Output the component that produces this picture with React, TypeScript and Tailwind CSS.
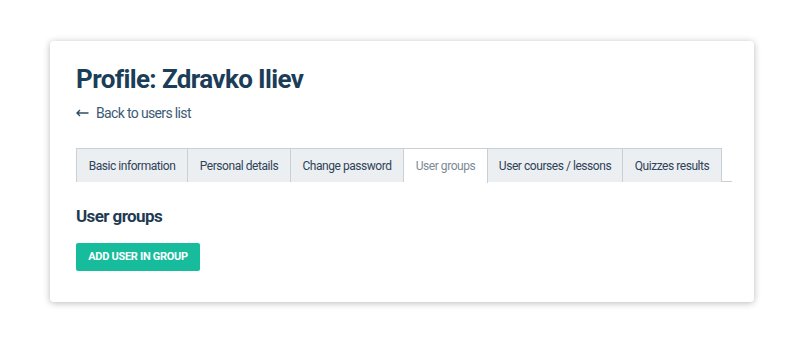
import React from "react";

const tabs = [
  { label: "Basic information", w: 112 },
  { label: "Personal details", w: 103 },
  { label: "Change password", w: 113 },
  { label: "User groups", w: 84, active: true },
  { label: "User courses / lessons", w: 135 },
  { label: "Quizzes results", w: 99 },
];

export default function App() {
  return (
    <div className="w-[802px] h-[343px] bg-white pt-[41px] pl-[50px]" style={{ fontFamily: "Roboto, 'Liberation Sans', sans-serif" }}>
      <div className="w-[704px] h-[261px] bg-white rounded-[4px] shadow-[0_1px_7px_rgba(0,0,0,0.28)] pl-[26px] pr-[22px] pt-[23px]">
        <h1 className="text-[26px] leading-[30px] font-bold text-[#1b3d57] tracking-[-0.62px]">Profile: Zdravko Iliev</h1>
        <div className="mt-[10px] flex items-center gap-[7px] text-[14px] leading-[18px] text-[#3c5a75] tracking-[-0.65px]">
          <svg width="13" height="8" viewBox="0 0 13 8" fill="none">
            <path d="M12.5 4H1.5M4 1L1 4L4 7" stroke="#2f4c66" strokeWidth="1.4" />
          </svg>
          <span>Back to users list</span>
        </div>
        <div className="mt-[26px] flex border-b border-[#c9d0d5] h-[34px]">
          {tabs.map((t) => (
            <div
              key={t.label}
              style={{ width: t.w }}
              className={
                t.active
                  ? "h-[35px] -mb-px flex items-center justify-center text-[12px] tracking-[-0.45px] text-[#7c8a96] bg-white border border-b-0 border-[#c9d0d5] border-l-0"
                  : "h-[34px] flex items-center justify-center text-[12px] tracking-[-0.45px] text-[#2f4257] bg-[#ebeff2] border border-b-0 border-[#c9d0d5] [&:not(:first-child)]:border-l-0"
              }
            >
              {t.label}
            </div>
          ))}
        </div>
        <h2 className="mt-[23px] text-[17px] leading-[22px] font-bold text-[#1f3b54] tracking-[-0.6px]">User groups</h2>
        <button className="mt-[16px] h-[28px] w-[124px] bg-[#17bc9d] rounded-[2px] text-white text-[11px] font-bold uppercase tracking-[-0.3px]">
          Add user in group
        </button>
      </div>
    </div>
  );
}
